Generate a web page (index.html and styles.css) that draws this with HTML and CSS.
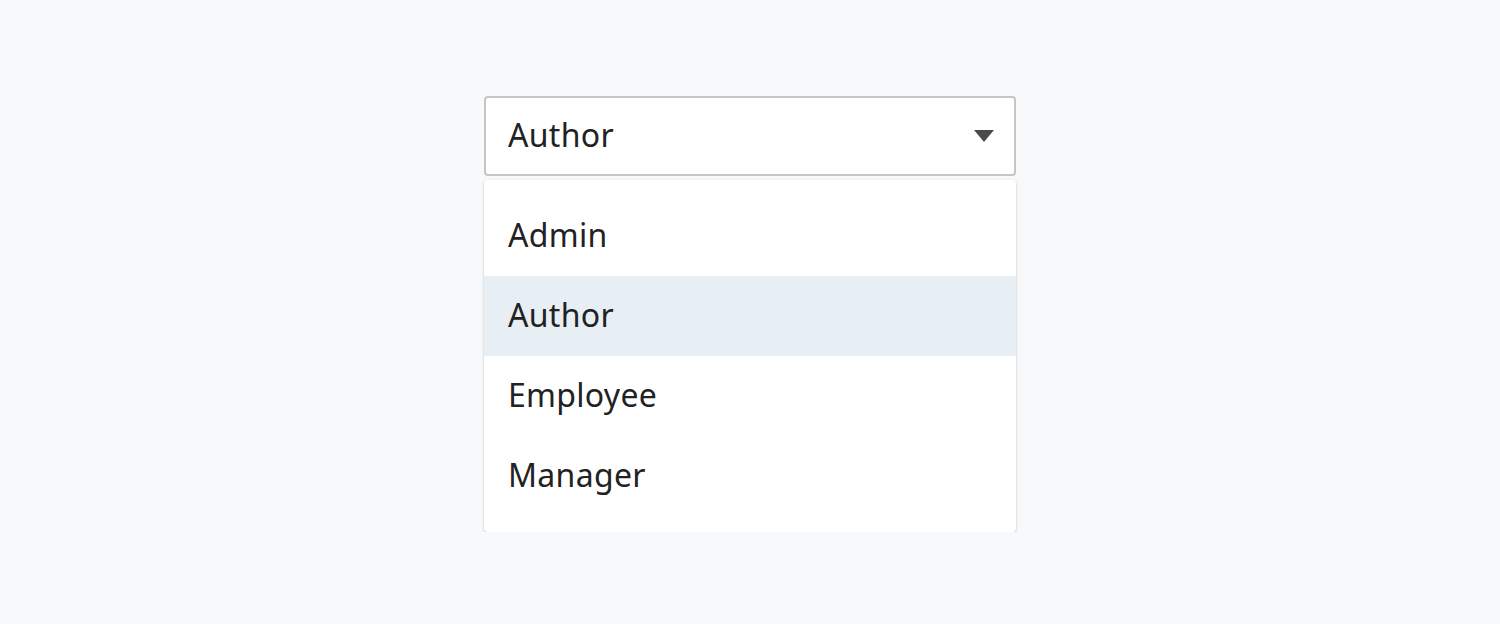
FILE: index.html
```html
<!DOCTYPE html>
<html lang="en">
<head>
<meta charset="utf-8">
<title>Select</title>
<link rel="stylesheet" href="styles.css">
</head>
<body>
<div class="select-wrap">
  <div class="select">
    <span class="select-value">Author</span>
    <svg class="caret" width="20" height="12" viewBox="0 0 20 12"><path d="M0 0 H20 L10 12 Z" fill="#4b4b4b"/></svg>
  </div>
  <ul class="menu">
    <li class="option">Admin</li>
    <li class="option selected">Author</li>
    <li class="option">Employee</li>
    <li class="option">Manager</li>
  </ul>
</div>
</body>
</html>
```
FILE: styles.css
```css
html, body {
  margin: 0;
  padding: 0;
  background: #f8f9fb;
  font-family: "Noto Sans", "Open Sans", sans-serif;
  color: #222;
}
.select-wrap {
  width: 532px;
  margin: 96px auto 0;
  display: flex;
  flex-direction: column;
  gap: 4px;
}
.select {
  box-sizing: border-box;
  height: 80px;
  background: #fff;
  border: 2px solid #c6c6c6;
  border-radius: 4px;
  display: flex;
  align-items: center;
  justify-content: space-between;
  padding: 0 20px 0 22px;
}
.select-value {
  font-size: 32px;
  letter-spacing: 0.3px;
  padding-bottom: 4px;
}
.caret {
  display: block;
}
.menu {
  list-style: none;
  margin: 0;
  padding: 16px 0;
  background: #fff;
  border-radius: 4px;
  box-shadow: 0 1px 3px rgba(0,0,0,0.22);
}
.option {
  box-sizing: border-box;
  height: 80px;
  display: flex;
  align-items: center;
  padding: 0 24px 4px;
  font-size: 32px;
  letter-spacing: 0.3px;
}
.option.selected {
  background: #e7eff5;
}
```
